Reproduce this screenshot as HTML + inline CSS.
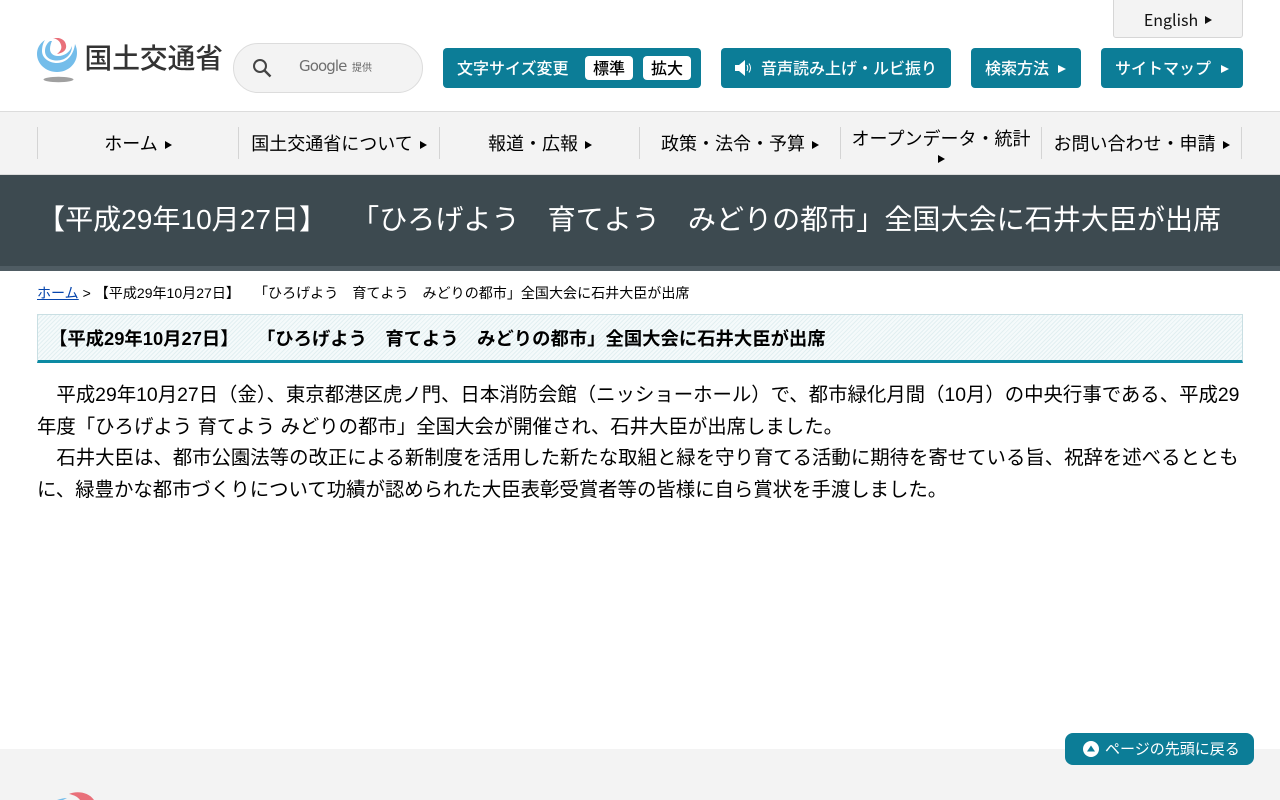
<!DOCTYPE html>
<html lang="ja">
<head>
<meta charset="utf-8">
<title>【平成29年10月27日】 「ひろげよう 育てよう みどりの都市」全国大会に石井大臣が出席</title>
<style>
html,body{margin:0;padding:0}
body{width:1280px;height:800px;overflow:hidden;position:relative;background:#fff;color:#000;font-family:"Liberation Sans","Noto Sans CJK JP",sans-serif}
div,a,span{box-sizing:border-box}
.a{position:absolute}
.btn{position:absolute;top:48px;height:40px;background:#0c7d97;border-radius:4px;color:#fff;font-family:"Noto Sans CJK JP",sans-serif;font-weight:500;font-size:16px;line-height:39px;white-space:nowrap}
.tri{display:inline-block;width:0;height:0;border-left:7px solid currentColor;border-top:4px solid transparent;border-bottom:4px solid transparent}
.btn .tri{border-left-width:8px;vertical-align:1px}
.sz{position:absolute;top:8px;width:48px;height:24px;background:#fff;border-radius:4px;color:#000;text-align:center;line-height:23px;font-size:16px}
.nav{position:absolute;top:127px;height:32px;width:201px;border-left:1px solid #d4d4d4;text-align:center;font-family:"Noto Sans CJK JP",sans-serif;font-size:18px;line-height:32px;white-space:nowrap}
.nav .tri{margin-left:7px;vertical-align:1px}
</style>
</head>
<body>
<svg class="a" style="left:37px;top:38px" width="190" height="46" viewBox="0 0 190 46">
<ellipse cx="21.500" cy="41.500" rx="15" ry="2.700" fill="#a0a0a0"/>
<path d="M8 2C2 6 0 11 0 16C0 26 9 34 20 34C31 34 40 26 40 15C40 12 39.500 9 38 6C37 15 31 25 20 25C12 25 5 20 5 13C5 9 6 5 8 2Z" fill="#74bdea"/>
<path d="M13 3C9 6 8 10 8 13C8 19 13 22.500 20 22.500C28 22.500 35 17 35 8C33 14 28 18 21 18C16 18 13 15 13 11C13 8 14 5 15 3Z" fill="#74bdea"/>
<path d="M16 0C22 -1 28 1 29 7C30 12 26 15 20 16C24 13 25 10 24 7C23 3 20 1 16 0Z" fill="#e9707a"/>
<text x="47.500" y="30" font-family="Noto Sans CJK JP,sans-serif" font-size="28" font-weight="500" fill="#333" textLength="138.500" lengthAdjust="spacingAndGlyphs">国土交通省</text>
</svg>
<div class="a" style="left:233px;top:43px;width:190px;height:50px;border:1px solid #dcdcdc;border-radius:25px;background:#f3f3f3"></div>
<svg class="a" style="left:251px;top:57px" width="22" height="22" viewBox="0 0 22 22"><circle cx="9" cy="9" r="6" fill="none" stroke="#444" stroke-width="2"/><path d="M13.500 13.500L19.500 19.500" stroke="#444" stroke-width="2.400"/></svg>
<div class="a" style="left:299px;top:56px;font-size:15px;color:#6f6f6f;line-height:21px;font-family:'DejaVu Sans',sans-serif;letter-spacing:-.9px">Google</div>
<div class="a" style="left:352px;top:60px;font-size:10px;color:#666;line-height:14px;font-family:'Noto Sans CJK JP',sans-serif">提供</div>

<div class="a" style="left:1113px;top:-1px;width:130px;height:39px;background:#f3f3f3;border:1px solid #d6d6d6;border-radius:0 0 3px 3px;text-align:center;font-family:'Noto Sans CJK JP',sans-serif;font-size:16px;line-height:39px;color:#111">English<span class="tri" style="margin-left:7px;vertical-align:2px"></span></div>

<div class="btn" style="left:443px;width:258px;padding-left:14px">文字サイズ変更<span class="sz" style="left:142px">標準</span><span class="sz" style="left:200px">拡大</span></div>
<div class="btn" style="left:721px;width:230px;padding-left:40px">音声読み上げ・ルビ振り
<svg class="a" style="left:13px;top:11px" width="20" height="18" viewBox="0 0 20 18"><path d="M1 6h4l6-5v16l-6-5H1z" fill="#fff"/><path d="M13 6c1 2 1 4 0 6M15 4.500c2 3 2 6 0 9" fill="none" stroke="#fff" stroke-width="1"/></svg></div>
<div class="btn" style="left:971px;width:110px;padding-left:14px">検索方法<span class="tri" style="margin-left:9px"></span></div>
<div class="btn" style="left:1101px;width:142px;padding-left:14px">サイトマップ<span class="tri" style="margin-left:10px"></span></div>

<div class="a" style="left:0;top:111px;width:1280px;height:64px;background:#f3f3f3;border-top:1px solid #dcdcdc;border-bottom:1px solid #dcdcdc"></div>
<div class="nav" style="left:37px">ホーム<span class="tri"></span></div>
<div class="nav" style="left:238px">国土交通省について<span class="tri"></span></div>
<div class="nav" style="left:439px">報道・広報<span class="tri"></span></div>
<div class="nav" style="left:639px">政策・法令・予算<span class="tri"></span></div>
<div class="nav" style="left:840px;line-height:20px;padding-top:1px;white-space:normal">オープンデータ・統計<br><span class="tri" style="margin:0;vertical-align:2px"></span></div>
<div class="nav" style="left:1041px;width:201px;border-right:1px solid #d4d4d4">お問い合わせ・申請<span class="tri"></span></div>

<div class="a" style="left:0;top:175px;width:1280px;height:96px;background:#3d4a50;border-bottom:5px solid #4f5c63"></div>
<div class="a" style="left:37px;top:202px;font-size:28.070px;line-height:36px;color:#fff;white-space:pre">【平成29年10月27日】　　<span style="margin-left:-4px">「ひろげよう　育てよう　みどりの都市」全国大会に石井大臣が出席</span></div>

<div class="a" style="left:37px;top:283px;font-size:14.050px;line-height:20px;white-space:pre"><a href="#" style="color:#0645ad">ホーム</a> &gt; 【平成29年10月27日】　　「ひろげよう　育てよう　みどりの都市」全国大会に石井大臣が出席</div>

<div class="a" style="left:37px;top:314px;width:1206px;height:49px;border:1px solid #c9dfe3;border-bottom:3px solid #0c8aa3;background:repeating-linear-gradient(-45deg,#e2eff1 0,#e2eff1 1px,#f5fafb 1px,#f5fafb 3px)"></div>
<div class="a" style="left:49px;top:326px;font-size:18.350px;line-height:26px;font-weight:bold;white-space:pre">【平成29年10月27日】　　「ひろげよう　育てよう　みどりの都市」全国大会に石井大臣が出席</div>

<div class="a" style="left:37px;top:380px;width:1206px;font-size:19.400px;line-height:31.500px">　平成29年10月27日（金）、東京都港区虎ノ門、日本消防会館（ニッショーホール）で、都市緑化月間（10月）の中央行事である、平成29年度「ひろげよう 育てよう みどりの都市」全国大会が開催され、石井大臣が出席しました。<br>　石井大臣は、都市公園法等の改正による新制度を活用した新たな取組と緑を守り育てる活動に期待を寄せている旨、祝辞を述べるとともに、緑豊かな都市づくりについて功績が認められた大臣表彰受賞者等の皆様に自ら賞状を手渡しました。</div>

<div class="a" style="left:0;top:749px;width:1280px;height:51px;background:#f3f3f3"></div>
<svg class="a" style="left:0;top:749px" width="120" height="51" viewBox="0 749 120 51"><path d="M69 794C75 791 88 791 94 800L80 800C78 797 74 795 69 794Z" fill="#e9707a"/><path d="M57 800C60 799 64 798 67 798L63 800Z" fill="#74bdea"/></svg>

<div class="a" style="left:1065px;top:733px;width:189px;height:32px;background:#0c7d97;border-radius:8px;color:#fff;font-family:'Noto Sans CJK JP',sans-serif;font-size:15px;line-height:32px;padding-left:40px;white-space:nowrap">ページの先頭に戻る
<svg class="a" style="left:18px;top:8px" width="16" height="16" viewBox="0 0 16 16"><circle cx="8" cy="8" r="8" fill="#fff"/><path d="M8 4.500L12 10.500H4z" fill="#0c7d97"/></svg></div>
</body>
</html>
